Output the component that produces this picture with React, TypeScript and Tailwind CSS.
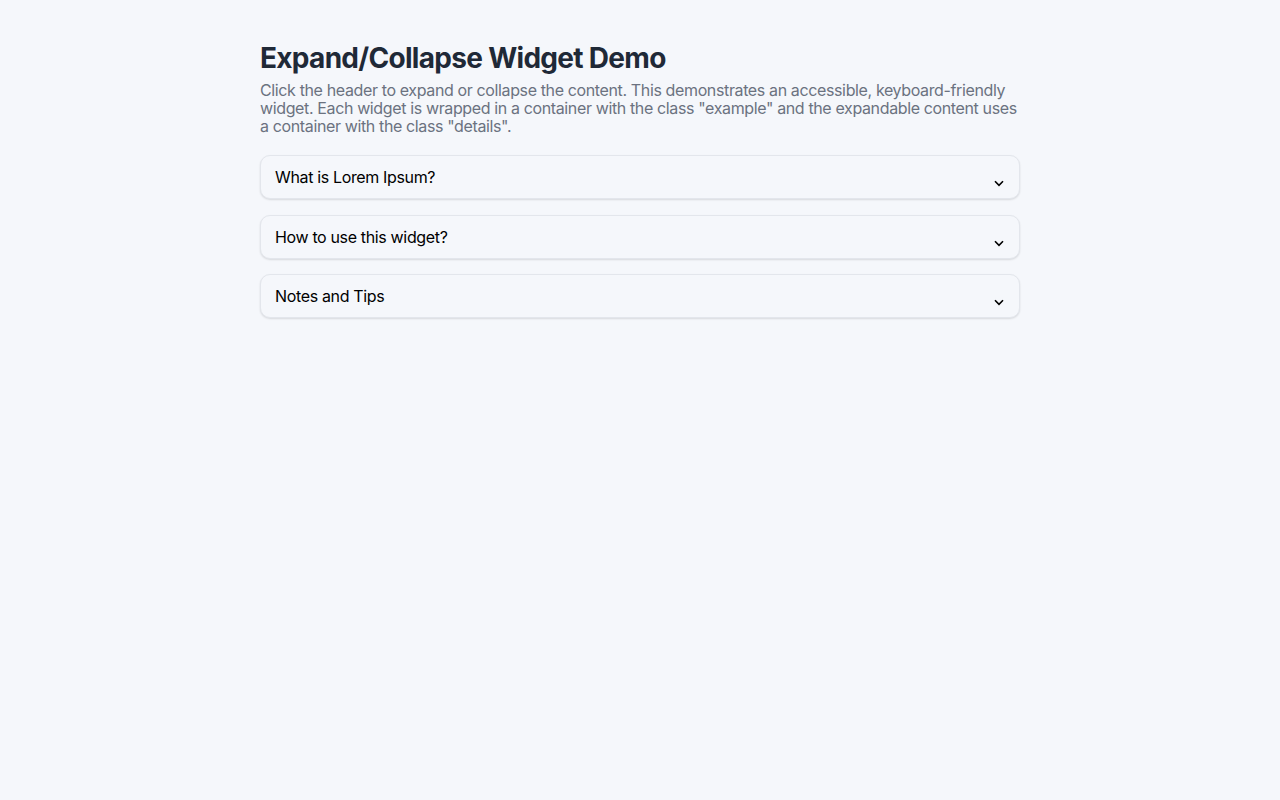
import React from "react";

const items = ["What is Lorem Ipsum?", "How to use this widget?", "Notes and Tips"];

export default function App() {
  return (
    <div className="min-h-screen bg-[#f5f7fb]" style={{ fontFamily: "Inter, 'Noto Sans', sans-serif" }}>
      <div className="mx-auto w-[760px] pt-[41px]">
        <h1 className="text-[28px] leading-[34px] font-bold text-[#1f2937] tracking-[-0.7px]">Expand/Collapse Widget Demo</h1>
        <p className="mt-[6px] text-[16px] leading-[18px] tracking-[-0.37px] text-[#6b7280]">
          Click the header to expand or collapse the content. This demonstrates an accessible, keyboard-friendly widget. Each widget is wrapped in a container with the class "example" and the expandable content uses a container with the class "details".
        </p>
        <div className="mt-[20px] flex flex-col gap-[15.5px]">
          {items.map((t) => (
            <div key={t} className="rounded-[10px] border border-[#e3e6ec] bg-[#f5f7fb] shadow-[0_1px_2px_rgba(0,0,0,0.12)]">
              <button className="flex h-[42px] w-full items-center justify-between px-[14px] text-left text-[16px] tracking-[-0.35px] text-black">
                <span>{t}</span>
                <svg width="10" height="7" viewBox="0 0 10 7" className="mt-[13px] mr-[1px]">
                  <path d="M1 1.2 L5 5.4 L9 1.2" fill="none" stroke="#000" strokeWidth="1.6" />
                </svg>
              </button>
            </div>
          ))}
        </div>
      </div>
    </div>
  );
}
